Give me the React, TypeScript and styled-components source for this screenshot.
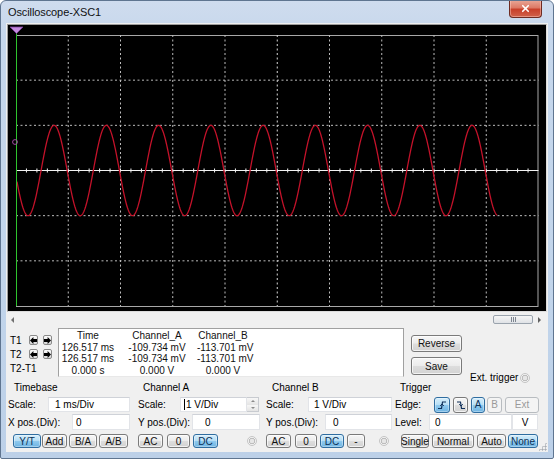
import React from 'react';
import styled, { createGlobalStyle, css } from 'styled-components';
import { X } from 'lucide-react';

const GlobalStyle = createGlobalStyle`
  html, body { margin: 0; padding: 0; background: #ffffff; }
  body { font-family: "Liberation Sans", Arial, sans-serif; font-size: 10px; color: #000; }
  * { box-sizing: border-box; }
`;

// plot geometry, in page pixels (the svg viewBox uses the same numbers)
const GRID = { left: 16, right: 538.5, top: 35, bottom: 306 };
const COLS = 10;
const ROWS = 6;
const colW = (GRID.right - GRID.left) / COLS;
const rowH = (GRID.bottom - GRID.top) / ROWS;
const midY = GRID.top + rowH * 3;

const sinePath = () => {
    const pts: string[] = [];
    for (let x = 17; x <= 497; x += 0.5) {
        const y = midY - 45.2 * Math.sin((2 * Math.PI * (x + 11.2)) / colW);
        pts.push(`${x.toFixed(1)},${y.toFixed(2)}`);
    }
    return 'M' + pts.join(' L');
};

const Plot = () => {
    const vLines = Array.from({ length: COLS - 1 }, (_, i) => GRID.left + colW * (i + 1));
    const hLines = Array.from({ length: ROWS - 1 }, (_, i) => GRID.top + rowH * (i + 1));
    const hTicks = Array.from({ length: COLS * 5 - 1 }, (_, i) => GRID.left + (colW / 5) * (i + 1));

    return (
        <svg width="538" height="286" viewBox="8 25 538 286" style={{ display: 'block' }}>
            <rect x="8" y="25" width="538" height="286" fill="#000" />
            <rect x={GRID.left + 0.5} y={GRID.top + 0.5} width={GRID.right - GRID.left - 1} height={GRID.bottom - GRID.top} fill="none" stroke="#a8a8a8" />
            {vLines.map((x, i) => (
                <line key={'v' + i} x1={x} x2={x} y1={GRID.top} y2={GRID.bottom} stroke={i === 4 ? '#d8d8d8' : '#bdbdbd'} strokeDasharray="2 2.5" />
            ))}
            {hLines.map((y, i) => i !== 2 && (
                <line key={'h' + i} x1={GRID.left} x2={GRID.right} y1={y} y2={y} stroke="#bdbdbd" strokeDasharray="2 2.5" />
            ))}
            {/* centre line with minor ticks */}
            <line x1={GRID.left} x2={GRID.right} y1={midY} y2={midY} stroke="#f2f2f2" />
            {hTicks.map((x, i) => (
                <line key={'ht' + i} x1={x} x2={x} y1={midY - 2} y2={midY + 2} stroke="#f2f2f2" />
            ))}
            <path d={sinePath()} fill="none" stroke="#c4122a" strokeWidth="1.3" />
            <line x1="16.5" x2="16.5" y1="28" y2={GRID.bottom} stroke="#2ec42e" />
            <polygon points="10,27 23,27 16.5,33.5" fill="#c58ae0" stroke="#7a3f99" strokeWidth="0.8" />
            <circle cx="15" cy="142" r="2.4" fill="none" stroke="#a44aa8" strokeWidth="1" />
        </svg>
    );
};

const ArrowGlyph = ({ dir }: { dir: 'left' | 'right' }) => (
    <svg width="7" height="7" viewBox="0 0 7 7">
        <path
            d="M0 3.5 L3.4 0 V2 H7 V5 H3.4 V7 Z"
            fill="#000"
            transform={dir === 'right' ? 'matrix(-1 0 0 1 7 0)' : undefined}
        />
    </svg>
);

const EdgeGlyph = ({ falling }: { falling?: boolean }) => (
    <svg width="10" height="10" viewBox="0 0 10 10">
        <path
            d={falling ? 'M1 2 H4.5 L5.5 8.5 H9' : 'M1 8.5 H4.5 L5.5 2 H9'}
            fill="none"
            stroke="#10305a"
            strokeWidth="1.2"
        />
        <path d={falling ? 'M3.2 4.2 L5 6 L6.8 4.2' : 'M3.2 5.8 L5 4 L6.8 5.8'} fill="none" stroke="#10305a" strokeWidth="1" />
    </svg>
);

const App = () => {
    return (
        <>
            <GlobalStyle />
            <Window>
                <TitleBar>
                    <Title>Oscilloscope-XSC1</Title>
                    <CloseButton>
                        <X size={11} strokeWidth={3.6} color="#ffffff" />
                    </CloseButton>
                </TitleBar>
                <Client>
                    <Screen>
                        <Plot />
                    </Screen>
                    <ScrollRow>
                        <ScrollArrow $dir="left" />
                        <ScrollThumb>
                            <i /><i /><i />
                        </ScrollThumb>
                        <ScrollArrow $dir="right" />
                    </ScrollRow>

                    <Readout>
                        <CursorColumn>
                            <CursorRow>
                                <CursorLabel>T1</CursorLabel>
                                <ArrowButton><ArrowGlyph dir="left" /></ArrowButton>
                                <ArrowButton><ArrowGlyph dir="right" /></ArrowButton>
                            </CursorRow>
                            <CursorRow>
                                <CursorLabel>T2</CursorLabel>
                                <ArrowButton><ArrowGlyph dir="left" /></ArrowButton>
                                <ArrowButton><ArrowGlyph dir="right" /></ArrowButton>
                            </CursorRow>
                            <CursorRow>
                                <CursorLabel>T2-T1</CursorLabel>
                            </CursorRow>
                        </CursorColumn>

                        <DataBox>
                            <DataGrid>
                                <span>Time</span><span>Channel_A</span><span>Channel_B</span>
                                <span>126.517 ms</span><span>-109.734 mV</span><span>-113.701 mV</span>
                                <span>126.517 ms</span><span>-109.734 mV</span><span>-113.701 mV</span>
                                <span>0.000 s</span><span>0.000 V</span><span>0.000 V</span>
                            </DataGrid>
                        </DataBox>

                        <SideButtons>
                            <WinButton $w={51} $h={17}>Reverse</WinButton>
                            <WinButton $w={51} $h={18}>Save</WinButton>
                        </SideButtons>

                        <ExtTrigger>
                            Ext. trigger
                            <Radio />
                        </ExtTrigger>
                    </Readout>

                    <Panel>
                        <Group $w={124} $gap={0}>
                            <GroupTitle $indent={6}>Timebase</GroupTitle>
                            <FieldRow>
                                <FieldLabel $w={40}>Scale:</FieldLabel>
                                <TextBox $w={82} $pad={6}>1 ms/Div</TextBox>
                            </FieldRow>
                            <FieldRow $h={16}>
                                <FieldLabel $w={64}>X pos.(Div):</FieldLabel>
                                <TextBox $w={58} $pad={3}>0</TextBox>
                            </FieldRow>
                            <ButtonRow $indent={5}>
                                <WinButton $w={28} $variant="active">Y/T</WinButton>
                                <WinButton $w={25} $gap={1}>Add</WinButton>
                                <WinButton $w={28} $gap={2}>B/A</WinButton>
                                <WinButton $w={29} $gap={2}>A/B</WinButton>
                            </ButtonRow>
                        </Group>

                        <Group $w={124} $gap={6}>
                            <GroupTitle $indent={5}>Channel A</GroupTitle>
                            <FieldRow>
                                <FieldLabel $w={42}>Scale:</FieldLabel>
                                <TextBox $w={67} $pad={3}><Caret />1 V/Div</TextBox>
                                <Spinner>
                                    <SpinHalf $up />
                                    <SpinHalf />
                                </Spinner>
                            </FieldRow>
                            <FieldRow $h={16}>
                                <FieldLabel $w={54}>Y pos.(Div):</FieldLabel>
                                <TextBox $w={68} $pad={12}>0</TextBox>
                            </FieldRow>
                            <ButtonRow>
                                <WinButton $w={25}>AC</WinButton>
                                <WinButton $w={23} $gap={4}>0</WinButton>
                                <WinButton $w={25} $gap={3} $variant="active">DC</WinButton>
                                <Radio $push />
                            </ButtonRow>
                        </Group>

                        <Group $w={128} $gap={4}>
                            <GroupTitle $indent={6}>Channel B</GroupTitle>
                            <FieldRow>
                                <FieldLabel $w={42}>Scale:</FieldLabel>
                                <TextBox $w={84} $pad={5}>1 V/Div</TextBox>
                            </FieldRow>
                            <FieldRow $h={16}>
                                <FieldLabel $w={59}>Y pos.(Div):</FieldLabel>
                                <TextBox $w={67} $pad={7}>0</TextBox>
                            </FieldRow>
                            <ButtonRow>
                                <WinButton $w={25}>AC</WinButton>
                                <WinButton $w={22} $gap={4}>0</WinButton>
                                <WinButton $w={24} $gap={3} $variant="active">DC</WinButton>
                                <WinButton $w={18} $gap={3}>-</WinButton>
                                <Radio $push />
                            </ButtonRow>
                        </Group>

                        <Group $w={145} $gap={1}>
                            <GroupTitle $indent={5}>Trigger</GroupTitle>
                            <FieldRow>
                                <FieldLabel $w={39}>Edge:</FieldLabel>
                                <WinButton $w={16} $h={16} $variant="active"><EdgeGlyph /></WinButton>
                                <WinButton $w={15} $h={16} $gap={3}><EdgeGlyph falling /></WinButton>
                                <WinButton $w={14} $h={16} $gap={3} $variant="active">A</WinButton>
                                <WinButton $w={15} $h={16} $gap={2} $variant="disabled">B</WinButton>
                                <WinButton $w={34} $h={16} $gap={3} $variant="disabled">Ext</WinButton>
                            </FieldRow>
                            <FieldRow $h={16}>
                                <FieldLabel $w={34}>Level:</FieldLabel>
                                <TextBox $w={83} $pad={5}>0</TextBox>
                                <TextBox $w={26} $pad={0} $center>V</TextBox>
                            </FieldRow>
                            <ButtonRow $indent={6}>
                                <WinButton $w={28}>Single</WinButton>
                                <WinButton $w={42} $gap={3}>Normal</WinButton>
                                <WinButton $w={29} $gap={3}>Auto</WinButton>
                                <WinButton $w={30} $gap={2} $variant="active">None</WinButton>
                            </ButtonRow>
                        </Group>
                    </Panel>
                    <Grip />
                </Client>
            </Window>
        </>
    );
};

export default App;

const Window = styled.div`
    width: 554px;
    height: 459px;
    display: flex;
    flex-direction: column;
    border: 1px solid #5f7590;
    border-radius: 6px 6px 2px 2px;
    background: linear-gradient(180deg, #cfdcee 0%, #c6d7ec 8%, #c2d5eb 60%, #bcd0e8 100%);
    overflow: hidden;
`;

const TitleBar = styled.div`
    height: 22px;
    display: flex;
    align-items: flex-start;
    padding-left: 7px;
    flex-shrink: 0;
`;

const Title = styled.span`
    margin-top: 5px;
    font-size: 11px;
    letter-spacing: -0.1px;
    color: #111;
`;

const CloseButton = styled.div`
    margin-left: auto;
    margin-right: 11px;
    margin-top: -1px;
    width: 33px;
    height: 18px;
    display: flex;
    align-items: center;
    justify-content: center;
    border: 1px solid #6e2b22;
    border-top: none;
    border-radius: 0 0 4px 4px;
    background: linear-gradient(180deg, #e9a898 0%, #dd7a66 45%, #c8402a 55%, #d0614a 100%);
    box-shadow: inset 0 0 0 1px rgba(255, 210, 200, 0.45);
`;

const Client = styled.div`
    flex: 1;
    margin: 0 5px 6px 5px;
    background: #f0f0f0;
    display: flex;
    flex-direction: column;
    position: relative;
`;

const Screen = styled.div`
    margin: 1px 1px 0 1px;
    width: 540px;
    height: 288px;
    border: 1px solid #9c9c9c;
    border-right-color: #dcdcdc;
    border-bottom-color: #dcdcdc;
    flex-shrink: 0;
`;

const ScrollRow = styled.div`
    height: 15px;
    display: flex;
    align-items: center;
    padding-left: 4px;
    flex-shrink: 0;
`;

const ScrollArrow = styled.span<{ $dir: 'left' | 'right' }>`
    width: 0;
    height: 0;
    border-top: 3px solid transparent;
    border-bottom: 3px solid transparent;
    ${({ $dir }) => $dir === 'left'
        ? css`border-right: 3px solid #707070; margin-left: 1px;`
        : css`border-left: 3px solid #606060; margin: 0 7px 0 5px;`}
`;

const ScrollThumb = styled.div`
    margin-left: auto;
    width: 40px;
    height: 9px;
    border: 1px solid #9aa3ad;
    border-radius: 2px;
    background: linear-gradient(180deg, #f6f6f6, #dfe2e6);
    display: flex;
    align-items: center;
    justify-content: center;
    gap: 1px;

    & i {
        width: 1px;
        height: 5px;
        background: #7d8590;
    }
`;

const Readout = styled.div`
    height: 53px;
    display: flex;
    padding-left: 4px;
    flex-shrink: 0;
`;

const CursorColumn = styled.div`
    width: 48px;
    padding-top: 6px;
    display: flex;
    flex-direction: column;
`;

const CursorRow = styled.div`
    height: 14px;
    display: flex;
    align-items: center;
`;

const CursorLabel = styled.span`
    width: 19px;
    white-space: nowrap;
`;

const ArrowButton = styled.span`
    width: 9px;
    height: 10px;
    margin-right: 5px;
    display: flex;
    align-items: center;
    justify-content: center;
    border: 1px solid #8a8a8a;
    border-radius: 2px;
    background: linear-gradient(180deg, #fbfbfb, #d8d8d8);
`;

const DataBox = styled.div`
    margin-top: 1px;
    width: 346px;
    height: 49px;
    background: #ffffff;
    border: 1px solid #a0a0a0;
    border-bottom-color: #e8e8e8;
`;

const DataGrid = styled.div`
    display: grid;
    grid-template-columns: 58px 80px 52px;
    padding-top: 1px;
    line-height: 11.5px;
    text-align: center;
    white-space: nowrap;
    color: #111;
`;

const SideButtons = styled.div`
    margin-left: 7px;
    padding-top: 8px;
    display: flex;
    flex-direction: column;
    gap: 5px;
`;

const ExtTrigger = styled.div`
    margin-left: 8px;
    align-self: flex-end;
    margin-bottom: -3px;
    display: flex;
    align-items: center;
    gap: 2px;
    white-space: nowrap;
`;

const Radio = styled.span<{ $push?: boolean }>`
    width: 10px;
    height: 10px;
    border-radius: 50%;
    border: 1px solid #c4c4c4;
    background: radial-gradient(circle, #e6e6e6 0 2px, #bdbdbd 2.5px 3px, #f2f2f2 3.5px);
    ${({ $push }) => $push && css`
        margin-left: auto;
        margin-right: 5px;
    `}
`;

const Panel = styled.div`
    flex: 1;
    display: flex;
    padding-left: 2px;
`;

const Group = styled.div<{ $w: number; $gap: number }>`
    width: ${({ $w }) => $w}px;
    margin-left: ${({ $gap }) => $gap}px;
    padding-top: 2px;
    display: flex;
    flex-direction: column;
    flex-shrink: 0;
`;

const GroupTitle = styled.div<{ $indent: number }>`
    height: 12px;
    line-height: 12px;
    padding-left: ${({ $indent }) => $indent}px;
    white-space: nowrap;
`;

const FieldRow = styled.div<{ $h?: number }>`
    height: ${({ $h }) => $h || 15}px;
    margin-top: ${({ $h }) => ($h ? 2 : 3)}px;
    display: flex;
    align-items: center;
`;

const FieldLabel = styled.span<{ $w: number }>`
    width: ${({ $w }) => $w}px;
    flex-shrink: 0;
    white-space: nowrap;
`;

const TextBox = styled.div<{ $w: number; $pad: number; $center?: boolean }>`
    width: ${({ $w }) => $w}px;
    height: 100%;
    padding-left: ${({ $pad }) => $pad}px;
    display: flex;
    align-items: center;
    justify-content: ${({ $center }) => ($center ? 'center' : 'flex-start')};
    background: #ffffff;
    border: 1px solid #e2e4e8;
    border-top-color: #cfd2d8;
    white-space: nowrap;
    flex-shrink: 0;
`;

const Caret = styled.span`
    width: 1px;
    height: 11px;
    background: #000;
    margin-right: 1px;
`;

const Spinner = styled.div`
    width: 12px;
    height: 100%;
    display: flex;
    flex-direction: column;
    border: 1px solid #c8cbd0;
    border-left: none;
`;

const SpinHalf = styled.span<{ $up?: boolean }>`
    flex: 1;
    display: flex;
    align-items: center;
    justify-content: center;
    background: linear-gradient(180deg, #f7f7f7, #e4e4e4);

    &::after {
        content: '';
        border-left: 2.5px solid transparent;
        border-right: 2.5px solid transparent;
        ${({ $up }) => $up
            ? css`border-bottom: 2.5px solid #8a8a8a;`
            : css`border-top: 2.5px solid #8a8a8a;`}
    }
`;

const ButtonRow = styled.div<{ $indent?: number }>`
    height: 14px;
    margin-top: 4px;
    padding-left: ${({ $indent }) => $indent || 0}px;
    display: flex;
    align-items: center;
`;

type Variant = 'normal' | 'active' | 'disabled';

const WinButton = styled.div<{ $w: number; $h?: number; $gap?: number; $variant?: Variant }>`
    width: ${({ $w }) => $w}px;
    height: ${({ $h }) => $h || 14}px;
    margin-left: ${({ $gap }) => $gap || 0}px;
    flex-shrink: 0;
    display: flex;
    align-items: center;
    justify-content: center;
    border-radius: 3px;
    white-space: nowrap;
    border: 1px solid #7a7a7a;
    color: #111;
    background: linear-gradient(180deg, #f6f6f6 0%, #ececec 48%, #dddddd 52%, #d2d2d2 100%);
    box-shadow: inset 0 0 0 1px rgba(255, 255, 255, 0.7);

    ${({ $variant }) => $variant === 'active' && css`
        border-color: #2f6da0;
        color: #0c2f55;
        background: linear-gradient(180deg, #d6eefb 0%, #b6def5 48%, #8ec9ee 52%, #6fb4e2 100%);
        box-shadow: inset 0 0 0 1px rgba(255, 255, 255, 0.35);
    `}

    ${({ $variant }) => $variant === 'disabled' && css`
        border-color: #b8bcc0;
        color: #9a9a9a;
        background: #f4f4f4;
        box-shadow: none;
    `}
`;

const Grip = styled.span`
    position: absolute;
    right: 1px;
    bottom: 1px;
    width: 9px;
    height: 9px;
    background-image: radial-gradient(circle, #a8acb2 0.9px, transparent 1.2px);
    background-size: 3px 3px;
    clip-path: polygon(100% 0, 100% 100%, 0 100%);
`;
